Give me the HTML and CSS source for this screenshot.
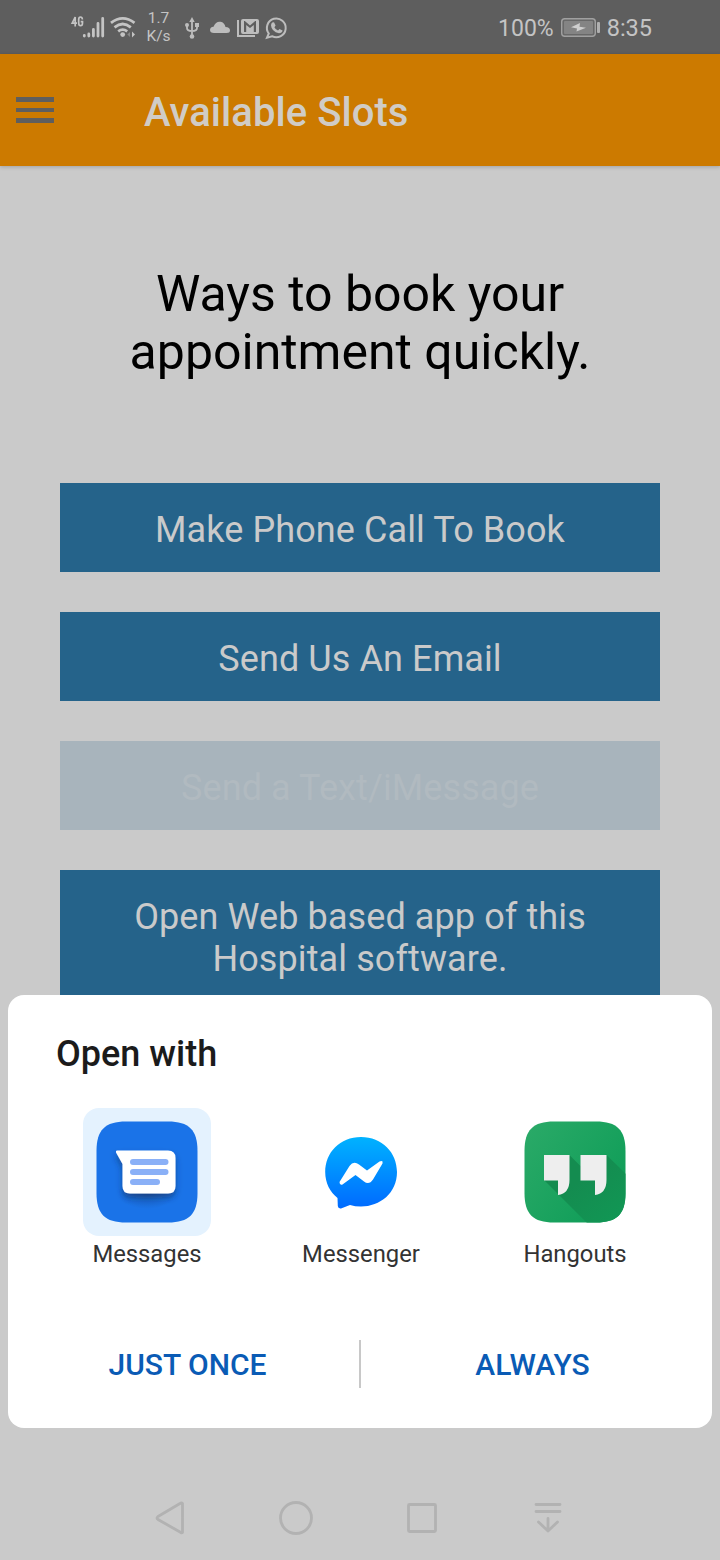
FILE: index.html
```html
<!DOCTYPE html>
<html lang="en">
<head>
<meta charset="utf-8">
<title>Available Slots</title>
<link rel="stylesheet" href="styles.css">
</head>
<body>
<div class="screen">
  <header class="status">
    <svg class="status-icons" width="75" height="54" viewBox="60 0 75 54">
      <g fill="none" stroke="#c4c4c4" stroke-width="1.700">
        <path d="M75.200 26.500V17L72.200 23.200H77M82.400 19.500Q82.200 17 80.500 17Q78.700 17 78.700 19.500V23Q78.700 25.700 80.600 25.700Q82.500 25.700 82.500 23V21.700H80.700"/>
      </g>
      <g stroke="#c4c4c4" stroke-width="2.800" stroke-linecap="round">
        <path d="M84.300 36V35.500M88.800 36V34M93.400 36V29.500M98 36V23.500M102.700 36V18.500"/>
      </g>
      <g fill="none" stroke="#c4c4c4" stroke-width="2.800">
        <path d="M111 22.800Q122.700 14 134.500 22.800M114.500 27.300Q122.700 20.800 130.800 27.300M118.200 31.300Q122.700 28 127.200 31.300"/>
      </g>
      <circle cx="122.700" cy="34.600" r="2.400" fill="#c4c4c4"/>
      <path d="M130 32V37L127.300 34.500Z" fill="#898989"/>
      <path d="M132 31.500V37.500L135 34.500Z" fill="#c4c4c4"/>
    </svg>
    <div class="speed"><span>1.7</span><span>K/s</span></div>
    <svg class="status-icons" width="110" height="54" viewBox="180 0 110 54">
      <g fill="none" stroke="#bdbdbd" stroke-width="1.800">
        <path d="M192 20V36M187 25V28Q187 31 192 31Q197 31 197 28V25"/>
      </g>
      <g fill="#bdbdbd">
        <path d="M192 17L194.700 22H189.300Z"/><circle cx="187" cy="25" r="2"/><rect x="195" y="23" width="4" height="4"/><circle cx="192" cy="36.500" r="2.300"/>
        <path d="M214 33Q210 33 210 30Q210 27 213.500 26.800Q216 21 220.500 21.800Q224.500 22.500 225.500 27Q230 27.300 230 30.500Q230 33 226.500 33Z"/>
        <path fill-rule="evenodd" d="M243 19H257Q259 19 259 21V32Q259 34 257 34H243Q241 34 241 32V21Q241 19 243 19ZM244 21V32H246.200V25L250 28L253.800 25V32H256V21H255.200L250 25.400L244.800 21Z"/>
      </g>
      <path d="M238 20V36H255" fill="none" stroke="#bdbdbd" stroke-width="2"/>
      <path d="M268.800 33.500A9.400 9.400 0 1 1 272 36.200L267 37.600Z" fill="none" stroke="#bdbdbd" stroke-width="2"/>
      <path d="M272.200 22.500L274 22.300L275.600 25.500L274.400 27.200Q275.500 29.600 278 30.500L279.500 29L282.600 30.500Q282 33.200 279 33.300Q271.500 31.500 271 25.500Q271 23.500 272.200 22.500Z" fill="#bdbdbd"/>
    </svg>
    <span class="percent">100%</span>
    <svg class="status-icons battery" width="40" height="20" viewBox="560 17 40 20">
      <rect x="561.700" y="18.700" width="33.600" height="17.600" rx="3" fill="#686868" stroke="#a0a0a0" stroke-width="1.400"/>
      <rect x="564" y="21" width="29" height="13" rx="1" fill="#848484"/>
      <path d="M580 23L571 27.300L577 28.500L576.500 31.500L586 27.800L579.500 26.700Z" fill="#cecece"/>
      <rect x="597" y="22" width="3" height="11" rx="1" fill="#b0b0b0"/>
    </svg>
    <span class="clock">8:35</span>
  </header>
  <div class="appbar">
    <div class="menu"><i></i><i></i><i></i></div>
    <h1>Available Slots</h1>
  </div>
  <main>
    <h2>Ways to book your<br>appointment quickly.</h2>
    <div class="actions">
      <div class="action">Make Phone Call To Book</div>
      <div class="action">Send Us An Email</div>
      <div class="action disabled">Send a Text/iMessage</div>
      <div class="action tall">Open Web based app of this<br>Hospital software.</div>
    </div>
  </main>
  <section class="sheet">
    <h3>Open with</h3>
    <div class="apps">
      <div class="app">
        <div class="tile selected">
          <svg width="128" height="128" viewBox="83 1108 128 128">
            <defs>
              <filter id="shade" x="-30%" y="-30%" width="170%" height="190%"><feDropShadow dx="0" dy="4" stdDeviation="3" flood-color="#09264f" flood-opacity=".5"/></filter>
              <radialGradient id="below"><stop stop-color="#164d9b" stop-opacity=".6"/><stop offset="1" stop-color="#164d9b" stop-opacity="0"/></radialGradient>
            </defs>
            <path d="M126 1121.500H168C189 1121.500 197.500 1130 197.500 1151V1193C197.500 1214 189 1222.500 168 1222.500H126C105 1222.500 96.500 1214 96.500 1193V1151C96.500 1130 105 1121.500 126 1121.500Z" fill="#1a73e8"/>
            <ellipse cx="147" cy="1194" rx="29" ry="15" fill="url(#below)"/>
            <path d="M117 1150.500H168Q175.500 1150.500 175.500 1158V1186Q175.500 1193.500 168 1193.500H130Q122.500 1193.500 122.500 1186V1164L116 1152.500Q115.500 1150.500 117 1150.500Z" fill="#fff" filter="url(#shade)"/>
            <path d="M133 1162H165.500M133 1172H165.500M133 1182H157" stroke="#8ab0f7" stroke-width="6" stroke-linecap="round"/>
          </svg>
        </div>
        <span>Messages</span>
      </div>
      <div class="app">
        <div class="tile">
          <svg width="128" height="128" viewBox="297 1108 128 128">
            <defs><linearGradient id="chat" x1="0" y1="0" x2="0" y2="1"><stop stop-color="#00b2ff"/><stop offset="1" stop-color="#006aff"/></linearGradient></defs>
            <path d="M361 1137C382 1137 397 1152.500 397 1172C397 1193 380 1206.500 361 1206.500Q355 1206.500 350 1205L341 1208.400Q338 1208.800 337.800 1206L337.500 1198C330 1192 325.200 1183 325.200 1172C325.200 1152.500 340 1137 361 1137Z" fill="url(#chat)"/>
            <path d="M339.500 1182L349.500 1166Q353.500 1160.500 359 1164.500L367 1170.500L379.500 1161.500Q383.500 1160 382.500 1163.500L373 1179.500Q369 1185.500 364 1181.500L355.500 1175L342.500 1184.500Q339.500 1185.500 339.500 1182Z" fill="#fff"/>
          </svg>
        </div>
        <span>Messenger</span>
      </div>
      <div class="app">
        <div class="tile">
          <svg width="128" height="128" viewBox="511 1108 128 128">
            <defs>
              <linearGradient id="leaf" x1="0" y1="0" x2="1" y2=".7"><stop stop-color="#2baa68"/><stop offset="1" stop-color="#0f9d58"/></linearGradient>
              <linearGradient id="fade" x1="0" y1="0" x2="1" y2="1"><stop offset=".4" stop-color="#148c50"/><stop offset="1" stop-color="#119855"/></linearGradient>
              <clipPath id="tile-shape"><path d="M554 1121.500H596C617 1121.500 625.500 1130 625.500 1151V1193C625.500 1214 617 1222.500 596 1222.500H554C533 1222.500 524.500 1214 524.500 1193V1151C524.500 1130 533 1121.500 554 1121.500Z"/></clipPath>
            </defs>
            <g clip-path="url(#tile-shape)">
              <rect x="524" y="1121" width="102" height="102" fill="url(#leaf)"/>
              <path d="M544 1180L587 1223H626V1174L606 1154.500L580.500 1166L569.500 1155Z" fill="url(#fade)"/>
            </g>
            <path d="M544 1155H569.500V1180Q569.500 1193.500 558 1195V1180.500H544ZM580.500 1155H606.500V1180Q606.500 1193.500 595 1195V1180.500H580.500Z" fill="#eee"/>
          </svg>
        </div>
        <span>Hangouts</span>
      </div>
    </div>
    <div class="choices"><span>JUST ONCE</span><i class="divider"></i><span>ALWAYS</span></div>
  </section>
  <nav class="navbar">
    <svg width="410" height="40" viewBox="150 1498 410 40" fill="none" stroke="#b2b2b2" stroke-width="2.800" stroke-linejoin="round" stroke-linecap="round">
      <path d="M182.500 1503.500V1532.500Q181.500 1533.500 180 1532L158 1519.500Q156 1518 158 1516.500L180 1503.500Q181.500 1502.500 182.500 1503.500Z"/>
      <circle cx="296" cy="1518" r="15.500"/>
      <rect x="408.500" y="1504.500" width="27" height="27" rx="1"/>
      <path d="M536 1504.500H560M536 1511.500H560M548 1518.500V1531M538.500 1522L548 1531L557.500 1522"/>
    </svg>
  </nav>
</div>
</body>
</html>
```
FILE: styles.css
```css
* { box-sizing: border-box; }
body { margin: 0; }
h1, h2, h3 { margin: 0; font-weight: 500; }
svg { display: block; flex: none; overflow: visible; }

.screen {
  position: relative;
  display: flex;
  flex-direction: column;
  width: 720px;
  height: 1560px;
  overflow: hidden;
  background: #cacaca;
  font-family: Roboto, "Liberation Sans", sans-serif;
}

.status {
  display: flex;
  align-items: center;
  height: 54px;
  flex: none;
  padding: 0 68px 0 60px;
  background: #5e5e5e;
  color: #c4c4c4;
}
.speed {
  display: flex;
  flex-direction: column;
  align-items: center;
  width: 45px;
  padding-left: 2px;
  font-size: 15.500px;
  line-height: 18px;
}
.percent { margin-left: auto; padding-top: 2px; font-size: 23px; }
.battery { margin: 0 7px 0 6px; }
.clock { padding-top: 2px; font-size: 23.500px; }

.appbar {
  position: relative;
  display: flex;
  align-items: center;
  height: 112px;
  flex: none;
  padding-left: 16px;
  background: #cc7a00;
  box-shadow: 0 1px 4px rgba(0, 0, 0, .2);
}
.menu { display: flex; flex-direction: column; gap: 6px; width: 38px; }
.menu i { height: 4.500px; background: #5e5e5e; }
.appbar h1 { margin: 6px 0 0 90px; font-size: 40px; line-height: 48px; letter-spacing: .05px; color: #d0ccc6; }

main { display: flex; flex-direction: column; padding: 99px 60px 0; }
h2 {
  font-size: 50px;
  font-weight: 400;
  line-height: 58px;
  text-align: center;
  color: #000;
}
.actions { display: flex; flex-direction: column; gap: 40px; margin-top: 102px; }
.action {
  display: flex;
  align-items: center;
  justify-content: center;
  height: 89px;
  padding-top: 4px;
  background: #25638a;
  color: #cacaca;
  font-size: 36px;
  line-height: 42px;
  text-align: center;
  letter-spacing: .1px;
}
.disabled { background: #a8b4bc; color: #b1bac0; }
.tall { height: 131px; }

/* Chooser dialog covering the page */
.sheet {
  position: absolute;
  left: 8px;
  right: 8px;
  bottom: 132px;
  height: 433px;
  padding: 38px 30px 0;
  border-radius: 16px;
  background: #fff;
}
.sheet h3 { padding-left: 18px; font-size: 36px; line-height: 42px; color: #1b1b1b; }
.apps { display: grid; grid-template-columns: repeat(3, 214px); margin-top: 33px; padding-left: 2px; }
.app { display: flex; flex-direction: column; align-items: center; gap: 4px; font-size: 23.800px; line-height: 28px; color: #333; }
.tile { width: 128px; height: 128px; border-radius: 16px; }
.selected { background: #e4f2fe; }
.choices {
  display: grid;
  grid-template-columns: 1fr 2px 1fr;
  align-items: center;
  margin: 72px -22px 0;
  text-align: center;
  color: #0a5bb5;
  font-size: 30px;
  font-weight: 500;
  line-height: 46px;
}
.choices span { padding-top: 2px; }
.divider { height: 48px; background: #c8c8c8; }

.navbar { display: flex; margin-top: auto; padding: 0 10px 22px 150px; }
```
